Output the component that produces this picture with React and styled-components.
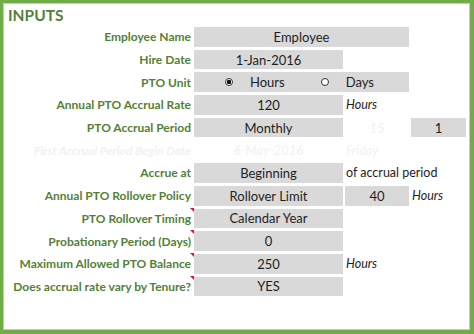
import React from 'react';
import styled, { createGlobalStyle } from 'styled-components';

const Global = createGlobalStyle`
  html, body { margin: 0; padding: 0; background: #fff; }
  body { font-family: Lato, "Open Sans", sans-serif; }
`;

const Frame = styled.div`
  width: 474px;
  height: 334px;
  box-sizing: border-box;
  border: 3px solid #70ad47;
  border-right-width: 4px;
  border-bottom-width: 4px;
  background: #fff;
`;

const Inner = styled.div`
  height: 100%;
  box-sizing: border-box;
  border: 1px solid #b8d9a0;
  padding: 3px 0 0 2px;
`;

const Title = styled.h1`
  margin: 0 0 3px 2px;
  font-size: 15.5px;
  line-height: 17px;
  font-weight: 700;
  color: #548235;
`;

const Form = styled.div`
  display: flex;
  flex-direction: column;
  gap: 3px;
`;

const Row = styled.div`
  display: grid;
  grid-template-columns: 186px 149px 64px 55px;
  column-gap: 2px;
  height: 19.7px;
`;

const Label = styled.div`
  position: relative;
  display: flex;
  align-items: center;
  justify-content: flex-end;
  padding-right: 1px;
  font-size: 12px;
  font-weight: 700;
  font-style: ${p => (p.faded ? 'italic' : 'normal')};
  color: ${p => (p.faded ? '#f1f1f1' : '#538135')};
  white-space: nowrap;

  &::after {
    content: '';
    display: ${p => (p.flag ? 'block' : 'none')};
    position: absolute;
    top: -1px;
    right: -2px;
    border-top: 4px solid #e0142c;
    border-left: 4px solid transparent;
  }
`;

const Cell = styled.div`
  grid-column: span ${p => p.span || 1};
  display: flex;
  align-items: center;
  justify-content: center;
  background: ${p => (p.faded ? 'transparent' : '#d9d9d9')};
  color: ${p => (p.faded ? '#f1f1f1' : '#1e1e1e')};
  font-size: 13px;
  font-style: ${p => (p.faded ? 'italic' : 'normal')};
  white-space: nowrap;
`;

const Note = styled.div`
  grid-column: span ${p => p.span || 1};
  display: flex;
  align-items: center;
  padding-left: 1px;
  font-size: 12.5px;
  font-style: ${p => (p.plain ? 'normal' : 'italic')};
  color: ${p => (p.faded ? '#f1f1f1' : '#1e1e1e')};
  white-space: nowrap;
`;

const RadioCell = styled(Cell)`
  justify-content: flex-start;
  padding-left: 31px;
`;

const Option = styled.span`
  display: flex;
  align-items: center;
  gap: 17px;
  margin-right: ${p => p.space || 0}px;
`;

const Dot = styled.span`
  width: 8px;
  height: 8px;
  box-sizing: border-box;
  border-radius: 50%;
  border: 1px solid #333;
  background: ${p => (p.on ? 'radial-gradient(circle, #111 0 2px, #fff 2.4px)' : '#fff')};
`;

const rows = [
  { label: 'Employee Name', cells: [<Cell key="a" span={2}>Employee</Cell>] },
  { label: 'Hire Date', cells: [<Cell key="a">1-Jan-2016</Cell>] },
  {
    label: 'PTO Unit',
    cells: [
      <RadioCell key="a" span={2}>
        <Option space={36}><Dot on />Hours</Option>
        <Option><Dot />Days</Option>
      </RadioCell>,
    ],
  },
  {
    label: 'Annual PTO Accrual Rate',
    cells: [<Cell key="a">120</Cell>, <Note key="b">Hours</Note>],
  },
  {
    label: 'PTO Accrual Period',
    cells: [<Cell key="a">Monthly</Cell>, <Cell key="b" faded>15</Cell>, <Cell key="c">1</Cell>],
  },
  {
    label: 'First Accrual Period Begin Date',
    faded: true,
    cells: [<Cell key="a" faded>6-May-2016</Cell>, <Note key="b" faded>Friday</Note>],
  },
  {
    label: 'Accrue at',
    cells: [<Cell key="a">Beginning</Cell>, <Note key="b" plain span={2}>of accrual period</Note>],
  },
  {
    label: 'Annual PTO Rollover Policy',
    cells: [<Cell key="a">Rollover Limit</Cell>, <Cell key="b">40</Cell>, <Note key="c">Hours</Note>],
  },
  { label: 'PTO Rollover Timing', flag: true, cells: [<Cell key="a">Calendar Year</Cell>] },
  { label: 'Probationary Period (Days)', flag: true, cells: [<Cell key="a">0</Cell>] },
  {
    label: 'Maximum Allowed PTO Balance',
    flag: true,
    cells: [<Cell key="a">250</Cell>, <Note key="b">Hours</Note>],
  },
  { label: 'Does accrual rate vary by Tenure?', flag: true, cells: [<Cell key="a">YES</Cell>] },
];

const App = () => (
  <Frame>
    <Global />
    <Inner>
      <Title>INPUTS</Title>
      <Form>
        {rows.map(row => (
          <Row key={row.label}>
            <Label faded={row.faded} flag={row.flag}>{row.label}</Label>
            {row.cells}
          </Row>
        ))}
      </Form>
    </Inner>
  </Frame>
);

export default App;
